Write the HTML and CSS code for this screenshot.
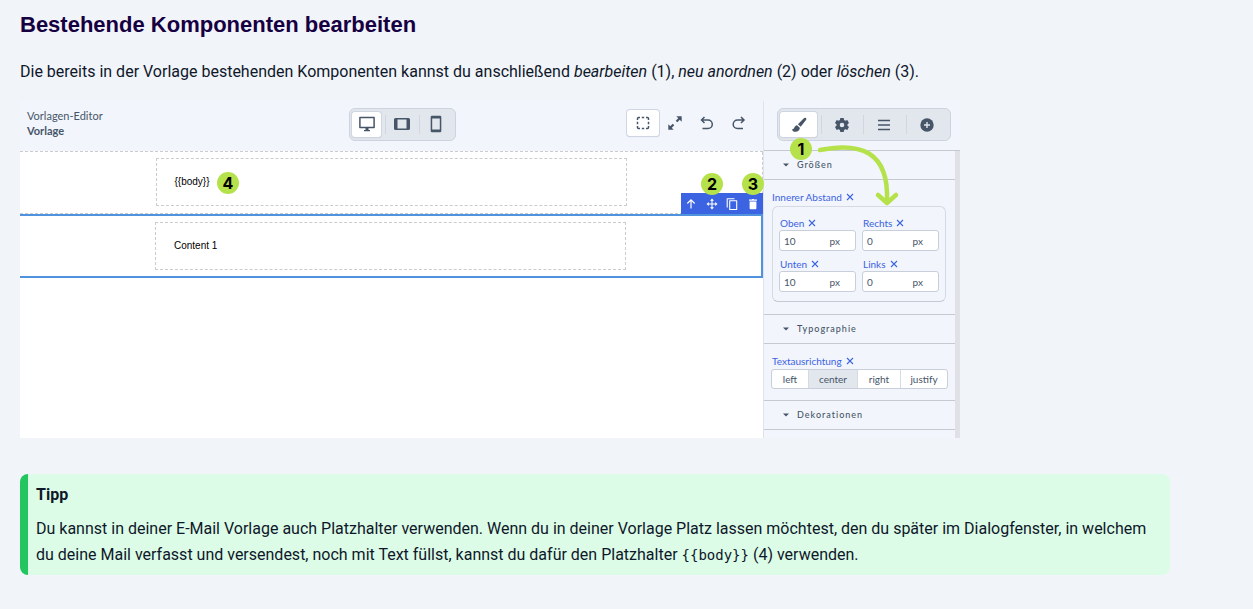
FILE: index.html
```html
<!DOCTYPE html>
<html lang="de">
<head>
<meta charset="utf-8">
<meta name="viewport" content="width=device-width, initial-scale=1">
<title>Bestehende Komponenten bearbeiten</title>
<link rel="stylesheet" href="styles.css">
</head>
<body>
<svg class="symbols" aria-hidden="true">
  <symbol id="x" viewBox="0 0 8 8"><path d="M1 1l6 6M7 1L1 7" fill="none" stroke="currentColor" stroke-width="1.1"/></symbol>
  <symbol id="caret" viewBox="0 0 6 4"><path d="M0 .5h6L3 3.5z" fill="currentColor"/></symbol>
</svg>
<main class="article">
  <h2 class="heading">Bestehende Komponenten bearbeiten</h2>
  <p class="intro">Die bereits in der Vorlage bestehenden Komponenten kannst du anschließend <em>bearbeiten</em> (1), <em>neu anordnen</em> (2) oder <em>löschen</em> (3).</p>

  <div class="editor">
    <section class="stage">
      <header class="stage-bar">
        <div class="title"><span>Vorlagen-Editor</span><strong>Vorlage</strong></div>
        <div class="segments devices">
          <button class="segment active" type="button" aria-label="Desktop"><svg width="18" height="18" viewBox="0 0 18 18"><path d="M1.900 2.500h14.200v10H1.900z" fill="none" stroke="currentColor" stroke-width="1.500" stroke-linejoin="round"/><path d="M7.500 12.500h3v2.500h1.500v1.300H6V15h1.500z" fill="currentColor"/></svg></button>
          <button class="segment" type="button" aria-label="Tablet"><svg width="18" height="18" viewBox="0 0 18 18"><path d="M2.500 3h13q1.500 0 1.500 1.500v9q0 1.500-1.500 1.500h-13Q1 15 1 13.500v-9Q1 3 2.500 3zM4.500 4.500v9h9v-9z" fill="currentColor" fill-rule="evenodd"/></svg></button>
          <button class="segment" type="button" aria-label="Smartphone"><svg width="18" height="18" viewBox="0 0 18 18"><path d="M5 .8h8q1.300 0 1.300 1.300v13.800q0 1.300-1.300 1.300H5q-1.300 0-1.300-1.300V2.100Q3.700.8 5 .8zM5.200 3.500v11h7.600v-11z" fill="currentColor" fill-rule="evenodd"/></svg></button>
        </div>
        <div class="tools">
          <button class="tool active" type="button" aria-label="Rahmen anzeigen"><svg width="14" height="14" viewBox="0 0 14 14"><path d="M1.500 4V2.500q0-1 1-1H4M10 1.500h1.500q1 0 1 1V4M12.500 10v1.500q0 1-1 1H10M4 12.500H2.500q-1 0-1-1V10M5.800 1.500h2.400M5.800 12.500h2.400M1.500 5.800v2.400M12.500 5.800v2.400" fill="none" stroke="currentColor" stroke-width="1.500"/></svg></button>
          <button class="tool" type="button" aria-label="Vollbild"><svg width="16" height="16" viewBox="0 0 16 16"><path d="M3 13l3.500-3.500M9.500 6.500L13 3" stroke="currentColor" stroke-width="2.200"/><path d="M9.300 1.300h5.400v5.400zM1.300 9.300v5.400h5.400z" fill="currentColor"/></svg></button>
          <button class="tool" type="button" aria-label="Rückgängig"><svg width="14" height="14" viewBox="0 0 14 14"><path d="M4.500 1l-3 3 3 3M1.500 4H8a4.300 4.300 0 0 1 0 8.600H2.500" fill="none" stroke="currentColor" stroke-width="1.500"/></svg></button>
          <button class="tool" type="button" aria-label="Wiederholen"><svg width="14" height="14" viewBox="0 0 14 14"><path d="M9 1l3 3-3 3M12 4H5.500a4.300 4.300 0 0 0 0 8.600H11" fill="none" stroke="currentColor" stroke-width="1.500"/></svg></button>
        </div>
      </header>
      <div class="canvas">
        <div class="row">
          <div class="cell"><span>{{body}}</span></div>
          <b class="badge badge-4">4</b>
        </div>
        <div class="row selected">
          <div class="cell"><span>Content 1</span></div>
          <div class="actions">
            <button type="button" aria-label="Nach oben"><svg width="12" height="12" viewBox="0 0 12 12"><path d="M6 10.500V2M2.300 5.500L6 1.800l3.700 3.700" fill="none" stroke="currentColor" stroke-width="1.200"/></svg></button>
            <button type="button" aria-label="Verschieben"><svg width="12" height="12" viewBox="0 0 12 12"><path d="M6 2v8M2 6h8" stroke="currentColor" stroke-width="1.100"/><path d="M6 .5l2 2.300H4zM6 11.500l2-2.300H4zM.5 6l2.300-2v4zM11.500 6L9.200 4v4z" fill="currentColor"/></svg></button>
            <button type="button" aria-label="Duplizieren"><svg width="12" height="12" viewBox="0 0 12 12"><path d="M3.700 2.800h7v8.700h-7zM1.200 9.500V.7h7.300" fill="none" stroke="currentColor" stroke-width="1.100" stroke-linejoin="round"/></svg></button>
            <button type="button" aria-label="Löschen"><svg width="12" height="12" viewBox="0 0 12 12"><path d="M2 1.500h2.700l.6-.6h1.400l.6.6H10v1.200H2zM2.600 3.500h6.800v6.800q0 1-1 1H3.600q-1 0-1-1z" fill="currentColor"/></svg></button>
            <b class="badge badge-2">2</b>
            <b class="badge badge-3">3</b>
          </div>
        </div>
      </div>
    </section>

    <aside class="panel">
      <header class="panel-bar">
        <div class="segments tabs">
          <button class="segment active" type="button" aria-label="Stil"><svg width="16" height="16" viewBox="0 0 16 16"><path d="M14.900 1.100c.7.600.6 1.200.1 2L9.700 9.800 6.900 7.300l6-6c.7-.7 1.300-.8 2-.2zM6.100 8.200l2.700 2.500c.1 2.800-2.200 4.100-4.600 4.100-2 0-3-1.100-3.200-2.900.9.500 1.700.4 2.100-.8.500-1.600 1.400-2.800 3-2.900z" fill="currentColor"/></svg></button>
          <button class="segment" type="button" aria-label="Einstellungen"><svg width="16" height="16" viewBox="0 0 16 16"><path d="M6.300 1h3.400l.4 2 1.300.7 1.900-.7L15 6l-1.500 1.300v1.400L15 10l-1.700 3-1.900-.7-1.300.7-.4 2H6.300l-.4-2-1.300-.7-1.900.7L1 10l1.500-1.300V7.300L1 6l1.700-3 1.900.7L5.900 3zM8 5.700a2.300 2.300 0 1 0 0 4.600 2.300 2.300 0 0 0 0-4.600z" fill="currentColor" fill-rule="evenodd"/></svg></button>
          <button class="segment" type="button" aria-label="Ebenen"><svg width="14" height="14" viewBox="0 0 14 14"><path d="M1 2.500h12M1 7h12M1 11.500h12" stroke="currentColor" stroke-width="1.500"/></svg></button>
          <button class="segment" type="button" aria-label="Hinzufügen"><svg width="14" height="14" viewBox="0 0 14 14"><circle cx="7" cy="7" r="6.700" fill="currentColor"/><path d="M7 4v6M4 7h6" stroke="#e2e6ed" stroke-width="1.400"/></svg></button>
        </div>
        <b class="badge badge-1">1</b>
        <svg class="arrow" width="88" height="70" viewBox="0 0 88 70" aria-hidden="true"><path d="M6 11C46 3 75 12 73 62M64 56l9 8 9-8" fill="none" stroke="#b5e24b" stroke-width="4.500" stroke-linecap="round" stroke-linejoin="round"/></svg>
      </header>
      <div class="panel-body">
        <button class="section" type="button"><svg width="6" height="4"><use href="#caret"/></svg>Größen</button>
        <div class="group sizes">
          <div class="label">Innerer Abstand<button type="button" aria-label="Innerer Abstand zurücksetzen"><svg width="8" height="8"><use href="#x"/></svg></button></div>
          <div class="fields">
            <div class="field">
              <div class="label"><label for="top">Oben</label><button type="button" aria-label="Oben zurücksetzen"><svg width="8" height="8"><use href="#x"/></svg></button></div>
              <div class="value"><input id="top" type="text" value="10"><span>px</span></div>
            </div>
            <div class="field">
              <div class="label"><label for="right">Rechts</label><button type="button" aria-label="Rechts zurücksetzen"><svg width="8" height="8"><use href="#x"/></svg></button></div>
              <div class="value"><input id="right" type="text" value="0"><span>px</span></div>
            </div>
            <div class="field">
              <div class="label"><label for="bottom">Unten</label><button type="button" aria-label="Unten zurücksetzen"><svg width="8" height="8"><use href="#x"/></svg></button></div>
              <div class="value"><input id="bottom" type="text" value="10"><span>px</span></div>
            </div>
            <div class="field">
              <div class="label"><label for="left">Links</label><button type="button" aria-label="Links zurücksetzen"><svg width="8" height="8"><use href="#x"/></svg></button></div>
              <div class="value"><input id="left" type="text" value="0"><span>px</span></div>
            </div>
          </div>
        </div>
        <button class="section" type="button"><svg width="6" height="4"><use href="#caret"/></svg>Typographie</button>
        <div class="group">
          <div class="label">Textausrichtung<button type="button" aria-label="Textausrichtung zurücksetzen"><svg width="8" height="8"><use href="#x"/></svg></button></div>
          <div class="align">
            <button type="button">left</button>
            <button class="on" type="button">center</button>
            <button type="button">right</button>
            <button type="button">justify</button>
          </div>
        </div>
        <button class="section" type="button"><svg width="6" height="4"><use href="#caret"/></svg>Dekorationen</button>
      </div>
    </aside>
  </div>

  <div class="tip">
    <strong class="tip-title">Tipp</strong>
    <p class="tip-text">Du kannst in deiner E-Mail Vorlage auch Platzhalter verwenden. Wenn du in deiner Vorlage Platz lassen möchtest, den du später im Dialogfenster, in welchem du deine Mail verfasst und versendest, noch mit Text füllst, kannst du dafür den Platzhalter <code>{{body}}</code> (4) verwenden.</p>
  </div>
</main>
</body>
</html>
```

FILE: styles.css
```css
* { box-sizing: border-box; }

body {
  margin: 0;
  background: #f1f4f9;
  color: #0f172a;
  font: 16px/26px Roboto, sans-serif;
}

button {
  display: flex;
  align-items: center;
  justify-content: center;
  margin: 0;
  padding: 0;
  border: 0;
  background: none;
  color: inherit;
  font: inherit;
  cursor: pointer;
}

svg { display: block; flex: none; }
.symbols { display: none; }

.article { max-width: 1190px; padding: 11px 20px 34px; }
.heading {
  margin: 0 0 20px;
  color: #160042;
  font: bold 22px/28px "Liberation Sans", Arial, sans-serif;
}
.intro { margin: 0 0 16px; }

/* Editor */
.editor {
  display: grid;
  grid-template-columns: minmax(0, 1fr) 197px;
  max-width: 940px;
  margin-bottom: 36px;
  background: #f2f5fb;
  color: #475569;
  font: 10px/14px Lato, sans-serif;
}
.stage { display: flex; flex-direction: column; }
.stage-bar {
  display: grid;
  grid-template-columns: 14fr auto 13fr;
  align-items: center;
  height: 50px;
  padding: 0 8px 4px 7px;
}
.title { display: flex; flex-direction: column; font-size: 11px; line-height: 15px; }

.segments {
  display: flex;
  height: 33px;
  padding: 2px;
  border: 1px solid #cdd4df;
  border-radius: 6px;
  background: #e2e6ed;
}
.segment { position: relative; flex: 1; border-radius: 3px; }
.segment + .segment::before {
  content: "";
  position: absolute;
  left: 0;
  height: 19px;
  border-left: 1px solid #d1d7e1;
}
.segment.active, .tool.active { background: #fff; box-shadow: 0 0 0 1px #cfd6e1, 0 1px 1px #b8c1ce; }
.segment.active { flex: none; margin: 1px 4px 1px 0; }
.devices { width: 107px; }
.devices .active { width: 29px; }
.tools { display: flex; justify-content: flex-end; }
.tool { width: 32px; height: 26px; border-radius: 3px; }
.tools, .title { padding-bottom: 2px; }

.canvas { flex: 1; border-top: 1px dashed #ccc; background: #fff; }
.row {
  position: relative;
  display: flex;
  justify-content: center;
  padding: 6px 0 7px;
  border-right: 1px dashed #ccc;
  border-bottom: 1px dashed #ccc;
}
.cell {
  display: flex;
  align-items: center;
  width: 471px;
  height: 48px;
  padding-left: 18px;
  border: 1px dashed #ccc;
  color: #000;
  font: 10px/14px "Liberation Sans", Arial, sans-serif;
}
.selected { padding: 6px 0; border: solid #4f93df; border-width: 2px 2px 2px 0; }
.actions {
  position: absolute;
  right: -2px;
  bottom: calc(100% + 2px);
  display: flex;
  width: 82px;
  height: 21px;
  background: #3b63e2;
  color: #fff;
}
.actions button { flex: 1; }

.badge {
  position: absolute;
  width: 22px;
  height: 22px;
  border-radius: 50%;
  background: #b5e24b;
  color: #000;
  font: bold 16px/22px Inter, sans-serif;
  text-align: center;
}
.badge-1 { left: 26px; top: 37px; z-index: 1; }
.badge-2 { right: 40px; bottom: 19px; }
.badge-3 { right: -1px; bottom: 19px; }
.badge-4 { left: 197px; top: 20px; }
.arrow { position: absolute; left: 50px; top: 38px; }

/* Side panel */
.panel { border-left: 1px solid #dfe3ea; }
.panel-bar {
  position: relative;
  height: 50px;
  padding: 7px 9px 0 13px;
  border-bottom: 1px solid #c5cad2;
}
.tabs .active { width: 37px; }
.panel-body { padding-bottom: 8px; border-right: 5px solid #dfe1e6; }
.section {
  justify-content: flex-start;
  gap: 8px;
  width: 100%;
  height: 29px;
  padding-left: 19px;
  border-bottom: 1px solid #c5cad2;
  font-size: 9px;
  font-weight: 500;
  letter-spacing: 1px;
}
.group + .section { height: 30px; border-top: 1px solid #c5cad2; }
.group { padding: 10px 7px 11px; }
.group.sizes { padding: 10px 9px 12px 8px; }
.label { display: flex; align-items: center; gap: 4px; height: 14px; color: #3b63e2; }
.group > .label { margin: 0 1px 1px; }
.sizes > .label { margin: 0 0 2px; }
.fields {
  display: grid;
  grid-template-columns: repeat(2, minmax(0, 1fr));
  gap: 6px;
  padding: 9px 6px;
  border: 1px solid #d5dae3;
  border-bottom-color: #c3cad5;
  border-radius: 6px;
}
.field .label { padding-left: 1px; }
.value {
  display: flex;
  align-items: center;
  height: 21px;
  padding: 0 15px 0 4px;
  border: 1px solid #c8cfda;
  border-radius: 3px;
  background: #fff;
}
.value input {
  flex: 1;
  min-width: 0;
  padding: 0;
  border: 0;
  outline: 0;
  background: none;
  color: inherit;
  font: inherit;
}
.align {
  display: grid;
  grid-template-columns: 36fr 49fr 43fr 47fr;
  height: 20px;
  overflow: hidden;
  border: 1px solid #c8cfda;
  border-radius: 3px;
  background: #fff;
}
.align button + button { border-left: 1px solid #d5dae3; }
.align .on { background: #e2e6ed; }

/* Tip */
.tip {
  padding: 8px 8px 7px;
  border-left: 8px solid #22c55e;
  border-radius: 8px;
  background: #dcfce7;
}
.tip-title { display: block; margin-bottom: 9px; line-height: 25px; }
.tip-text { margin: 0; }
.tip code { font: 14px/20px "DejaVu Sans Mono", monospace; }
```
